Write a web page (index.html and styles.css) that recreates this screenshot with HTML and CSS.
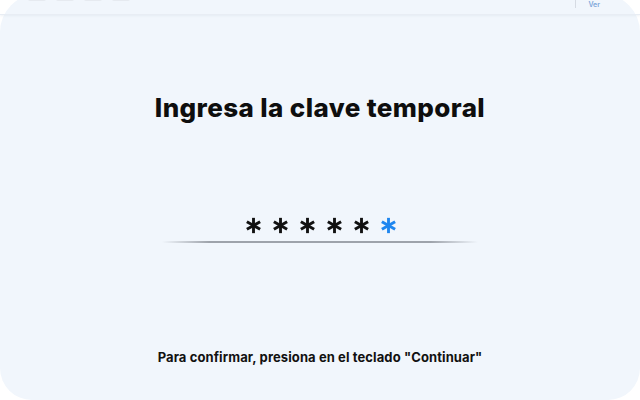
FILE: index.html
```html
<!DOCTYPE html>
<html lang="es">
<head>
<meta charset="utf-8">
<title>Clave temporal</title>
<link rel="stylesheet" href="styles.css">
</head>
<body>
<div class="card">
  <div class="topbar">
    <div class="nav">
      <span class="ghost"></span><span class="ghost"></span><span class="ghost"></span><span class="ghost"></span>
    </div>
    <div class="right">
      <span class="divider"></span>
      <span class="link">Ver</span>
    </div>
  </div>
  <h1 class="title">Ingresa la clave temporal</h1>
  <div class="pin">
    <div class="stars">
      <svg class="star" viewBox="0 0 20 20"><g stroke="currentColor" stroke-width="3.4"><line x1="10" y1="1" x2="10" y2="19"/><line x1="2.2" y1="5.5" x2="17.8" y2="14.5"/><line x1="2.2" y1="14.5" x2="17.8" y2="5.5"/></g></svg>
      <svg class="star" viewBox="0 0 20 20"><g stroke="currentColor" stroke-width="3.4"><line x1="10" y1="1" x2="10" y2="19"/><line x1="2.2" y1="5.5" x2="17.8" y2="14.5"/><line x1="2.2" y1="14.5" x2="17.8" y2="5.5"/></g></svg>
      <svg class="star" viewBox="0 0 20 20"><g stroke="currentColor" stroke-width="3.4"><line x1="10" y1="1" x2="10" y2="19"/><line x1="2.2" y1="5.5" x2="17.8" y2="14.5"/><line x1="2.2" y1="14.5" x2="17.8" y2="5.5"/></g></svg>
      <svg class="star" viewBox="0 0 20 20"><g stroke="currentColor" stroke-width="3.4"><line x1="10" y1="1" x2="10" y2="19"/><line x1="2.2" y1="5.5" x2="17.8" y2="14.5"/><line x1="2.2" y1="14.5" x2="17.8" y2="5.5"/></g></svg>
      <svg class="star" viewBox="0 0 20 20"><g stroke="currentColor" stroke-width="3.4"><line x1="10" y1="1" x2="10" y2="19"/><line x1="2.2" y1="5.5" x2="17.8" y2="14.5"/><line x1="2.2" y1="14.5" x2="17.8" y2="5.5"/></g></svg>
      <svg class="star active" viewBox="0 0 20 20"><g stroke="currentColor" stroke-width="3.4"><line x1="10" y1="1" x2="10" y2="19"/><line x1="2.2" y1="5.5" x2="17.8" y2="14.5"/><line x1="2.2" y1="14.5" x2="17.8" y2="5.5"/></g></svg>
    </div>
    <div class="underline"></div>
  </div>
  <p class="hint">Para confirmar, presiona en el teclado "Continuar"</p>
</div>
</body>
</html>
```
FILE: styles.css
```css
html, body {
  margin: 0;
  padding: 0;
  background: #ffffff;
  width: 640px;
  height: 400px;
  overflow: hidden;
}
.card {
  box-sizing: border-box;
  width: 640px;
  height: 406px;
  margin-top: -6px;
  background: #f1f6fc;
  border-radius: 38px 38px 32px 32px;
  display: flex;
  flex-direction: column;
  align-items: center;
  font-family: Inter, "Open Sans", sans-serif;
  color: #111111;
}
.topbar {
  box-sizing: border-box;
  width: 100%;
  height: 21px;
  padding: 0 40px 0 28px;
  display: flex;
  justify-content: space-between;
  align-items: flex-start;
  border-bottom: 1px solid #e8edf4;
  box-shadow: 0 1px 2px rgba(210, 218, 230, 0.35);
}
.nav {
  display: flex;
  gap: 10px;
}
.ghost {
  width: 18px;
  height: 7px;
  background: #e6eaf0;
  border-radius: 2px;
}
.right {
  display: flex;
  align-items: flex-start;
  gap: 12px;
}
.divider {
  width: 1px;
  height: 14px;
  background: #d6dbe3;
}
.link {
  margin-top: 7px;
  font-size: 7px;
  line-height: 8px;
  color: #7fa8da;
  font-weight: 600;
}
.title {
  margin: 77px 0 0 0;
  font-size: 26px;
  line-height: 32px;
  font-weight: 800;
  letter-spacing: 0.4px;
  color: #0e0e0e;
}
.pin {
  margin-top: 93px;
  display: flex;
  flex-direction: column;
  align-items: center;
}
.stars {
  display: flex;
  gap: 10px;
  padding-left: 2px;
}
.star {
  width: 17px;
  height: 17px;
  color: #111111;
  display: block;
}
.star.active {
  color: #1f86ef;
}
.underline {
  margin-top: 7px;
  width: 316px;
  height: 2px;
  background: linear-gradient(to right, rgba(150, 155, 165, 0) 0%, #9ea3ab 15%, #9ea3ab 85%, rgba(150, 155, 165, 0) 100%);
}
.hint {
  margin: 106px 0 0 0;
  font-size: 13px;
  line-height: 16px;
  font-weight: 700;
  letter-spacing: 0.1px;
  color: #111111;
}
```
